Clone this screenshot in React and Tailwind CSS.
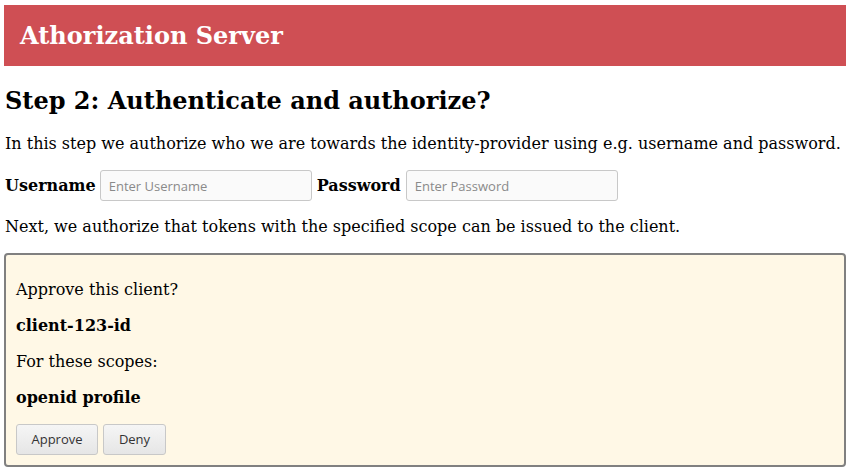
export default function App() {
  const serif = { fontFamily: '"DejaVu Serif", serif' };

  return (
    <div
      className="pl-[4px] pr-[2px] pt-[5px] text-[16px] text-black bg-white min-h-screen"
      style={serif}
    >
      {/* header */}
      <div className="bg-[#cf4f54] h-[61px] flex items-center pl-[16px]">
        <h1 className="text-white font-bold text-[24px] leading-none">
          Athorization Server
        </h1>
      </div>

      <h2 className="font-bold text-[24px] leading-[28px] mt-[21px] mb-[19px] pl-[1px]">
        Step 2: Authenticate and authorize?
      </h2>

      <p className="leading-[20px] my-[16px] pl-[1px]">
        In this step we authorize who we are towards the identity-provider using
        e.g. username and password.
      </p>

      <div className="flex items-center h-[31px]">
        <label className="font-bold pl-[1px] mr-[4px]">Username</label>
        <input
          type="text"
          placeholder="Enter Username"
          className="w-[212px] h-[31px] border border-[#c8c8c8] rounded-[3px] bg-[#fafafa] px-[8px] text-[13px] outline-none placeholder:text-[#8a8a8a] mr-[5px]"
          style={{ fontFamily: '"Open Sans", sans-serif' }}
        />
        <label className="font-bold mr-[5px]">Password</label>
        <input
          type="password"
          placeholder="Enter Password"
          className="w-[212px] h-[31px] border border-[#c8c8c8] rounded-[3px] bg-[#fafafa] px-[8px] text-[13px] outline-none placeholder:text-[#8a8a8a]"
          style={{ fontFamily: '"Open Sans", sans-serif' }}
        />
      </div>

      <p className="leading-[20px] my-[16px] pl-[1px]">
        Next, we authorize that tokens with the specified scope can be issued to
        the client.
      </p>

      {/* approval box */}
      <div className="border-2 border-[#808080] rounded-[4px] bg-[#fff8e6] px-[10px] pt-[9px] pb-[10px]">
        <p className="leading-[20px] my-[16px]">Approve this client?</p>
        <p className="leading-[20px] my-[16px] font-bold">client-123-id</p>
        <p className="leading-[20px] my-[16px]">For these scopes:</p>
        <p className="leading-[20px] my-[16px] font-bold">openid profile</p>
        <div
          className="flex gap-[5px] text-[13px]"
          style={{ fontFamily: '"Open Sans", sans-serif' }}
        >
          <button className="w-[82px] h-[31px] border border-[#c8c8c8] rounded-[3px] bg-gradient-to-b from-[#f5f5f5] to-[#e6e6e6] text-[#333]">
            Approve
          </button>
          <button className="w-[63px] h-[31px] border border-[#c8c8c8] rounded-[3px] bg-gradient-to-b from-[#f5f5f5] to-[#e6e6e6] text-[#333]">
            Deny
          </button>
        </div>
      </div>
    </div>
  );
}
